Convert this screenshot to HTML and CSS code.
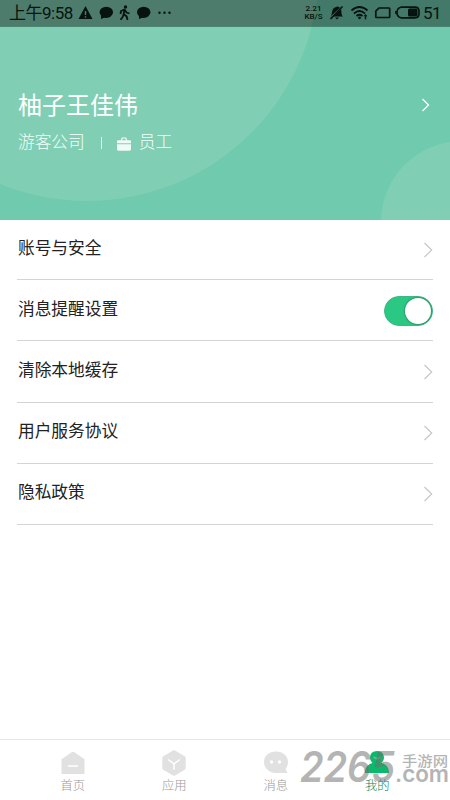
FILE: index.html
```html
<!DOCTYPE html>
<html lang="zh-CN">
<head>
<meta charset="UTF-8">
<meta name="viewport" content="width=device-width, initial-scale=1">
<title>我的</title>
<link rel="stylesheet" href="styles.css">
</head>
<body>
<div class="app">
  <header class="hero">
    <svg class="hero-art" viewBox="0 0 450 220" aria-hidden="true">
      <circle cx="87" cy="-31" r="232"/>
      <circle cx="462" cy="222" r="81"/>
    </svg>
    <div class="status">
      <span class="time">上午9:58</span>
      <svg class="status-left" viewBox="78 0 94 26">
        <path d="M85.500 6 92.500 19H78.500Z"/>
        <path class="cut" d="M85.500 11v4M85.500 16.300v1.500"/>
        <ellipse cx="106.300" cy="12.300" rx="6.700" ry="5.600"/><path d="M101 14v5l5-2Z"/>
        <circle cx="125.500" cy="7" r="1.700"/>
        <path class="walk" d="m120.500 14 .5-3 3.500-1.500 2 3 3 1M124.500 9.500l-.8 4.500 3 2.500.8 3.500M123.700 14l-1 3-2.200 2.700"/>
        <ellipse cx="143.700" cy="12.300" rx="6.700" ry="5.600"/><path d="M139 14v5l5-2Z"/>
        <circle cx="159.500" cy="12.700" r="1.200"/><circle cx="164.500" cy="12.700" r="1.200"/><circle cx="169.500" cy="12.700" r="1.200"/>
      </svg>
      <div class="speed"><span>2.21</span><span>KB/S</span></div>
      <svg class="status-right" viewBox="330 0 92 26">
        <path d="M331.500 16.500c2-1.500 1-7 3.500-8.500 1-1 2-.8 3-1.500 1 0 2 .5 3 1.200ZM334.500 16.500 342 9c.7 2.500 0 6 2 7.500ZM336 17.500h4l-2 2Z"/>
        <path class="line" d="M331.500 19 343.500 6.500"/>
        <path class="line" d="M352.500 10.500q8-7 16 0M355 13.500q5.500-5 11 0M357.500 16q3-2.500 6 0"/>
        <circle cx="360.500" cy="17.800" r="1.400"/>
        <path d="m366.500 14-2 2.200h1.300v3h1.400v-3h1.300Z"/>
        <path class="line" d="M380 8h10q.7 0 .7.700v8q0 .8-.7.800h-12.500q-.7 0-.7-.8v-5.500Z"/>
        <path class="line" d="M402 7.200h14q4 0 4 4v2.600q0 4-4 4h-14q-4-1-4-5.300t4-5.300Z"/>
        <rect x="409" y="8.500" width="9.500" height="8" rx="1.500"/><path class="line" d="M397 11v3"/>
      </svg>
      <span class="battery">51</span>
    </div>
    <div class="profile">
      <div class="who">
        <h1>柚子王佳伟</h1>
        <p><span>游客公司</span><i></i>
          <svg class="case" viewBox="0 0 14 14"><path d="M1.200 3.300H3.800L4.800.4h4.400l1 2.900h2.600q1.200 0 1.200 1.200v1.700H0V4.500q0-1.200 1.200-1.200ZM5.200 3.300h3.600L8.400 1.500H5.600ZM0 7.300h14v5q0 1.400-1.400 1.400H1.400Q0 13.700 0 12.300Z"/></svg>
          <span>员工</span></p>
      </div>
      <svg class="hero-arrow" viewBox="0 0 9 14"><path d="m1.500 1 6 6-6 6"/></svg>
    </div>
  </header>
  <main class="list">
    <a class="row"><span>账号与安全</span><svg class="arrow" viewBox="0 0 10 16"><path d="m1.500 1 7.200 7-7.200 7"/></svg></a>
    <div class="row"><span>消息提醒设置</span><span class="switch"><b></b></span></div>
    <a class="row"><span>清除本地缓存</span><svg class="arrow" viewBox="0 0 10 16"><path d="m1.500 1 7.200 7-7.200 7"/></svg></a>
    <a class="row"><span>用户服务协议</span><svg class="arrow" viewBox="0 0 10 16"><path d="m1.500 1 7.200 7-7.200 7"/></svg></a>
    <a class="row"><span>隐私政策</span><svg class="arrow" viewBox="0 0 10 16"><path d="m1.500 1 7.200 7-7.200 7"/></svg></a>
  </main>
  <nav class="tabs">
    <a><svg viewBox="0 0 26 26"><path d="M1.500 9.200 12 2q1-.7 2 0l10.500 7.200V24h-23Z"/><path class="mark" d="M8 16h10"/></svg>首页</a>
    <a><svg viewBox="0 0 26 26"><path d="M12 .6q1-.6 2 0l9.700 5.600q1 .6 1 1.700v10.200q0 1.100-1 1.700L14 25.400q-1 .6-2 0l-9.700-5.600q-1-.6-1-1.700V7.900q0-1.100 1-1.700Z"/><path class="mark" d="m7 9.500 6 4.300 6-4.300M13 13.800v6"/></svg>应用</a>
    <a><svg viewBox="0 0 26 26"><path d="M13 1.500c7 0 12 4.600 12 10.500 0 3-1 5-2.500 7l2 4H13C6 23 1 18 1 12S6 1.500 13 1.500Z"/><circle class="dot" cx="8.500" cy="12" r="1.700"/><circle class="dot" cx="16.500" cy="12" r="1.700"/></svg>消息</a>
    <a class="on"><svg viewBox="0 0 26 26"><path d="M13 1c4.200 0 7 2.800 7 6.500 0 2.300-1 4-2.500 5.500 4.500 1.500 7.500 4 7.500 10H1c0-6 3-8.500 7.500-10C7 11.500 6 9.800 6 7.500 6 3.800 8.800 1 13 1Z"/><path class="shade" d="M9.500 7q3.500 3 7 0"/></svg>我的</a>
  </nav>
  <svg class="stamp" viewBox="296 745 154 45">
    <text class="big" x="300" y="782" textLength="95" lengthAdjust="spacingAndGlyphs">2265</text>
    <text class="com" x="395" y="782" textLength="54" lengthAdjust="spacingAndGlyphs">.com</text>
    <text class="cn" x="402" y="766" textLength="46" lengthAdjust="spacingAndGlyphs">手游网</text>
  </svg>
</div>
</body>
</html>
```
FILE: styles.css
```css
* { box-sizing: border-box; }
body { margin: 0; background: #fff; font-family: Roboto, "Noto Sans CJK SC", sans-serif; }
.app { position: relative; width: 450px; height: 800px; display: flex; flex-direction: column; overflow: hidden; }
.hero { position: relative; height: 220px; background: #70caad; flex: none; }
.hero-art { position: absolute; inset: 0; width: 450px; height: 220px; fill: #80cfb5; }
.status { position: relative; height: 27px; padding: 0 9px; display: flex; align-items: center; background: rgba(0, 0, 0, .4); color: #07130f; border-bottom: 1px solid rgba(70, 150, 120, .4); }
.status svg { fill: #07130f; height: 26px; flex: none; }
.time { width: 69px; flex: none; font-size: 17px; line-height: 26px; white-space: nowrap; letter-spacing: -.5px; }
.status-left { width: 94px; }
.status-right { width: 92px; margin-left: 6px; }
.cut { stroke: #4c7c6d; stroke-width: 1.4; }
.walk { fill: none; stroke: #07130f; stroke-width: 1.8; stroke-linejoin: round; }
.status .line { fill: none; stroke: #07130f; stroke-width: 1.7; }
.speed { margin-left: 132px; width: 19px; flex: none; display: flex; flex-direction: column; align-items: center; font-size: 8px; line-height: 8px; font-weight: 500; white-space: nowrap; }
.battery { font-size: 17px; margin-left: 2px; line-height: 26px; letter-spacing: -.5px; }
.profile { position: relative; display: flex; justify-content: space-between; padding: 61px 20px 0 18px; color: #fff; }
h1 { margin: 0; font-size: 24px; line-height: 36px; font-weight: 400; }
p { margin: 7px 0 0; display: flex; align-items: center; font-size: 16.700px; line-height: 24px; font-weight: 300; color: #f5fffa; }
p i { width: 1px; height: 12px; margin: 0 14px 0 16px; background: #e2f6ee; }
.case { width: 14px; height: 14px; margin: 1px 8px 0 1px; fill: #f0fbf6; }
.hero-arrow { width: 9px; height: 14px; margin-top: 10px; fill: none; stroke: #fff; stroke-width: 1.3; }
.list { padding: 0 17px; flex: 1; }
.row { height: 61.250px; padding: 0 0 3px 1px; display: flex; align-items: center; justify-content: space-between; border-bottom: 1px solid #d4d4d4; font-size: 16.700px; color: #222; }
.row:first-child { height: 60px; }
.row > span:first-child { line-height: 24px; margin-top: 2px; }
.arrow { width: 10px; height: 16px; margin-top: 4px; fill: none; stroke: #c7c7c7; stroke-width: 1.2; }
.switch { width: 49px; height: 30px; padding: 0 1px; margin-top: 4px; border-radius: 15px; background: #2bc883; border: 1px solid #3fb784; display: flex; justify-content: flex-end; align-items: center; }
.switch b { width: 26px; height: 26px; border-radius: 50%; background: #fff; box-shadow: 0 0 1px 1px rgba(50, 100, 75, .45); }
.tabs { height: 61px; padding: 0 22px; border-top: 1px solid #e6e6e6; display: grid; grid-template-columns: repeat(4, 1fr); flex: none; }
.tabs a { display: flex; flex-direction: column; align-items: center; padding-top: 10px; font-size: 12.300px; line-height: 20px; font-weight: 300; color: #999; }
.tabs svg { width: 26px; height: 26px; fill: #e1e1e1; }
.tabs .mark { fill: none; stroke: #fff; stroke-width: 1.5; }
.tabs .dot { fill: #fff; }
.tabs .on { color: #108557; }
.tabs .on svg { fill: #0cb96c; }
.tabs .shade { fill: none; stroke: #63b891; stroke-width: 2; }
.stamp { position: absolute; left: 296px; top: 745px; width: 154px; height: 45px; fill: #707070; opacity: .52; }
.big { font: italic 600 42px Inter, sans-serif; }
.com { font: 600 23px Inter, sans-serif; }
.cn { font: 500 14px "Noto Sans CJK SC", sans-serif; }
```
